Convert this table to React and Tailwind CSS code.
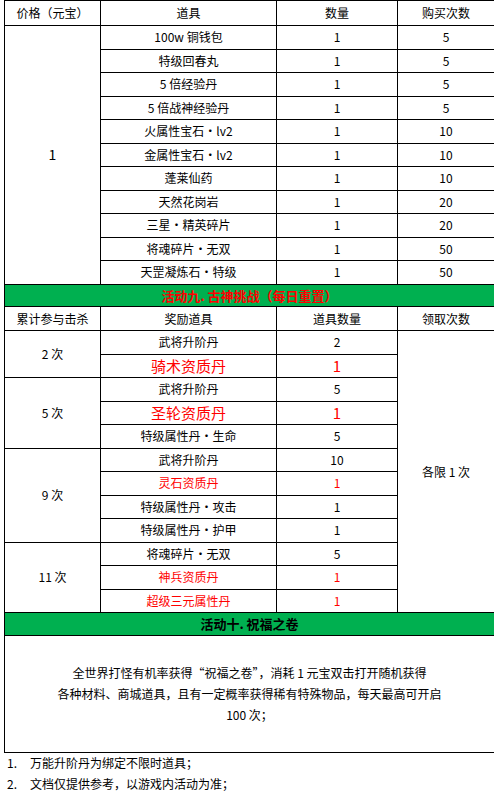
import React from "react";

const F = { fontFamily: '"Noto Sans CJK SC", "Noto Sans", sans-serif' };

const shop = [
  ["100w 铜钱包", "1", "5"],
  ["特级回春丸", "1", "5"],
  ["5 倍经验丹", "1", "5"],
  ["5 倍战神经验丹", "1", "5"],
  ["火属性宝石・lv2", "1", "10"],
  ["金属性宝石・lv2", "1", "10"],
  ["蓬莱仙药", "1", "10"],
  ["天然花岗岩", "1", "20"],
  ["三星・精英碎片", "1", "20"],
  ["将魂碎片・无双", "1", "50"],
  ["天罡凝炼石・特级", "1", "50"],
];

const groups = [
  {
    label: "2 次",
    items: [
      ["武将升阶丹", "2", ""],
      ["骑术资质丹", "1", "big"],
    ],
  },
  {
    label: "5 次",
    items: [
      ["武将升阶丹", "5", ""],
      ["圣轮资质丹", "1", "big"],
      ["特级属性丹・生命", "5", ""],
    ],
  },
  {
    label: "9 次",
    items: [
      ["武将升阶丹", "10", ""],
      ["灵石资质丹", "1", "red"],
      ["特级属性丹・攻击", "1", ""],
      ["特级属性丹・护甲", "1", ""],
    ],
  },
  {
    label: "11 次",
    items: [
      ["将魂碎片・无双", "5", ""],
      ["神兵资质丹", "1", "red"],
      ["超级三元属性丹", "1", "red"],
    ],
  },
];

const td = "border border-black text-center align-middle p-0";

export default function App() {
  let first = true;
  return (
    <div className="bg-white w-[494px] h-[793px] text-[12px] text-black" style={F}>
      <div className="pl-[4px]">
        <table className="table-fixed border-collapse w-[490px]">
          <colgroup>
            <col className="w-[96px]" />
            <col className="w-[176px]" />
            <col className="w-[121px]" />
            <col className="w-[97px]" />
          </colgroup>
          <tbody>
            <tr className="h-[25px]">
              <td className={td}>价格（元宝）</td>
              <td className={td}>道具</td>
              <td className={td}>数量</td>
              <td className={td}>购买次数</td>
            </tr>
            {shop.map((r, i) => (
              <tr key={i} className="h-[23.5px]">
                {i === 0 && (
                  <td className={td + " text-[14px]"} rowSpan={shop.length}>
                    1
                  </td>
                )}
                <td className={td}>{r[0]}</td>
                <td className={td}>{r[1]}</td>
                <td className={td}>{r[2]}</td>
              </tr>
            ))}
            <tr className="h-[22.5px]">
              <td colSpan={4} className={td + " bg-[#00b050] text-[#ff0000] font-bold text-[13px]"}>
                活动九. 古神挑战（每日重置）
              </td>
            </tr>
            <tr className="h-[24px]">
              <td className={td}>累计参与击杀</td>
              <td className={td}>奖励道具</td>
              <td className={td}>道具数量</td>
              <td className={td}>领取次数</td>
            </tr>
            {groups.map((g, gi) =>
              g.items.map((it, ii) => {
                const showLimit = first;
                first = false;
                const cls =
                  it[2] === "big"
                    ? " text-[#ff0000] text-[15px]"
                    : it[2] === "red"
                    ? " text-[#ff0000]"
                    : "";
                return (
                  <tr key={gi + "-" + ii} className="h-[23.5px]">
                    {ii === 0 && (
                      <td className={td} rowSpan={g.items.length}>
                        {g.label}
                      </td>
                    )}
                    <td className={td + cls}>{it[0]}</td>
                    <td className={td + cls}>{it[1]}</td>
                    {showLimit && (
                      <td className={td} rowSpan={12}>
                        各限 1 次
                      </td>
                    )}
                  </tr>
                );
              })
            )}
            <tr className="h-[22.5px]">
              <td colSpan={4} className={td + " bg-[#00b050] font-bold text-[13px]"}>
                活动十. 祝福之卷
              </td>
            </tr>
            <tr className="h-[117px]">
              <td colSpan={4} className={td + " leading-[21px]"}>
                全世界打怪有机率获得“祝福之卷”，消耗 1 元宝双击打开随机获得
                <br />
                各种材料、商城道具，且有一定概率获得稀有特殊物品，每天最高可开启
                <br />
                100 次；
              </td>
            </tr>
          </tbody>
        </table>
      </div>
      <div className="text-[12px]">
        <div className="flex h-[21px] items-center">
          <span className="w-[30px] pl-[7px]">1.</span>
          <span>万能升阶丹为绑定不限时道具；</span>
        </div>
        <div className="flex h-[20px] items-center">
          <span className="w-[30px] pl-[7px]">2.</span>
          <span>文档仅提供参考，以游戏内活动为准；</span>
        </div>
      </div>
    </div>
  );
}
